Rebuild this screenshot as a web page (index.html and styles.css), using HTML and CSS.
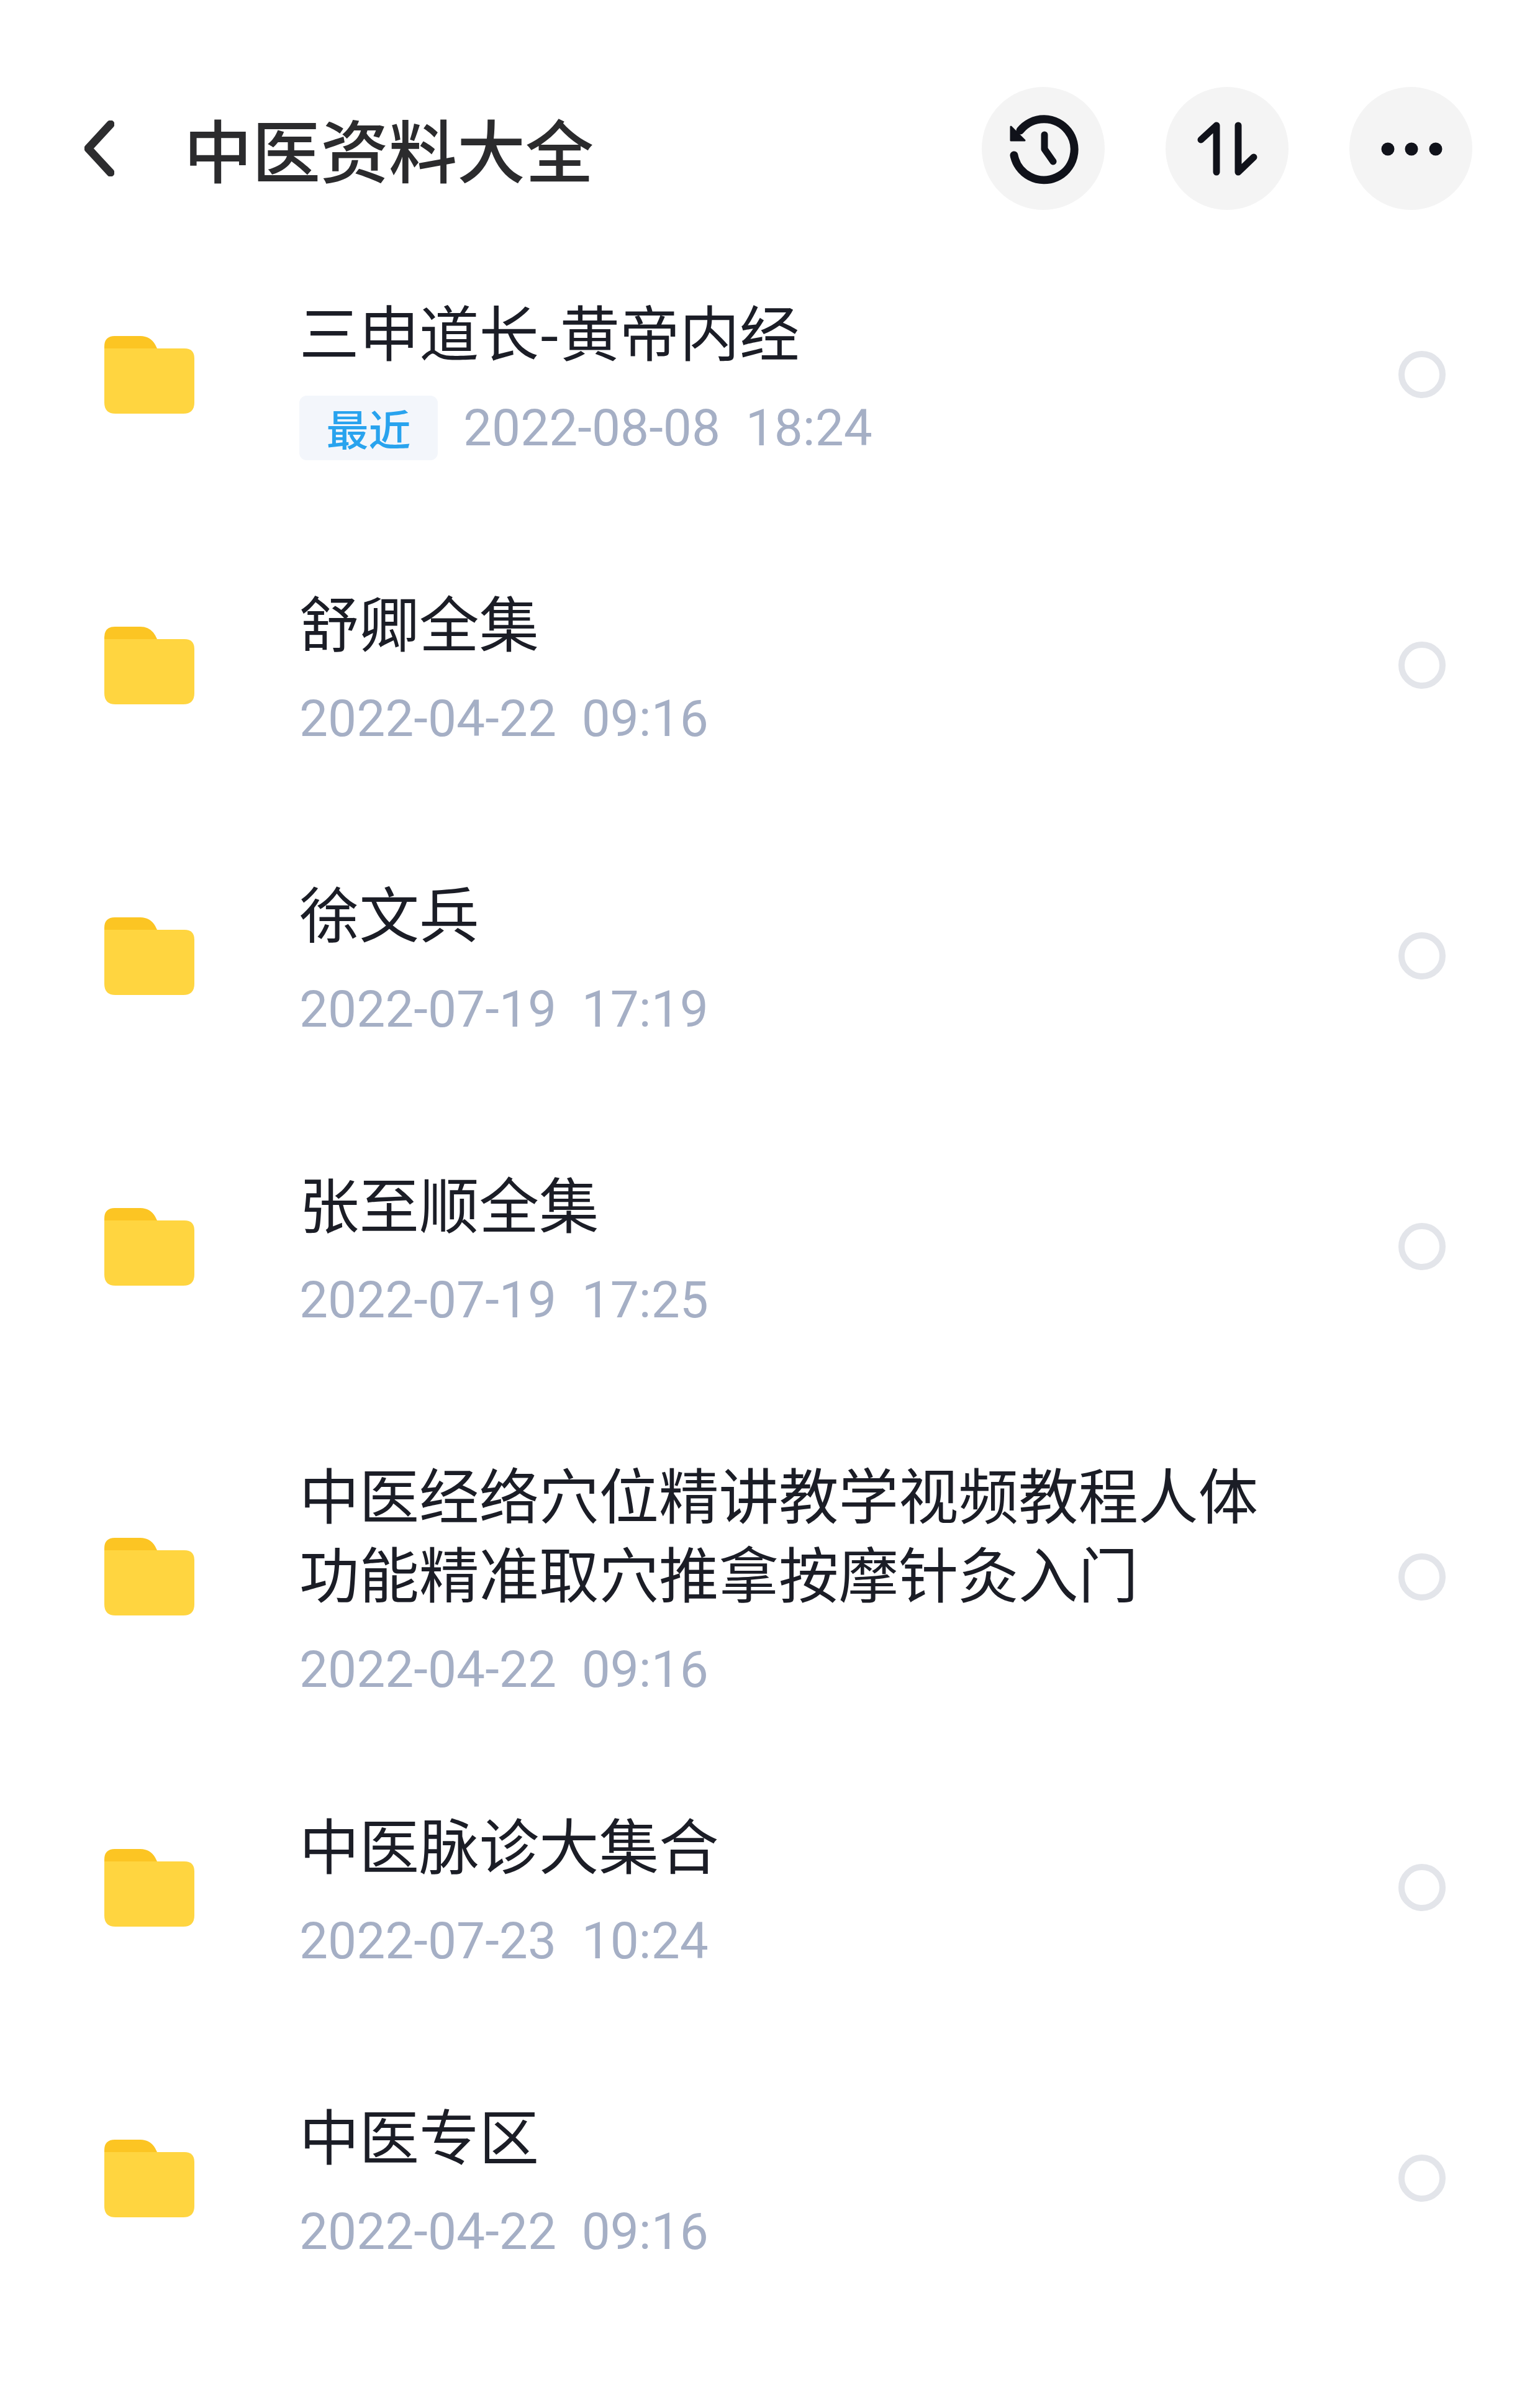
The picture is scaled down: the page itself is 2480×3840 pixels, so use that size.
FILE: index.html

```html
<!DOCTYPE html>
<html lang="zh-CN">
<head>
  <meta charset="UTF-8">
  <meta name="viewport" content="width=device-width, initial-scale=1.0">
  <title>中医资料大全</title>
  <link rel="stylesheet" href="styles.css">
</head>
<body>
  <svg class="defs" width="0" height="0">
    <symbol id="folder" viewBox="0 0 145 125">
      <path fill="#fcc523" d="M0 40 V17 Q0 0 17 0 H58 Q74 0 82 14 L90 30 H0 Z"/>
      <path fill="#ffd540" d="M0 20 H129 Q145 20 145 36 V107 Q145 125 127 125 H18 Q0 125 0 107 Z"/>
    </symbol>
  </svg>

  <header class="top-bar">
    <svg class="back" viewBox="0 0 48 90">
      <path d="M42 6 L6 45 L42 84"/>
    </svg>
    <h1 class="page-title">中医资料大全</h1>
    <div class="actions">
      <button class="round-btn">
        <svg viewBox="0 0 198 198">
          <path class="line" d="M52 110 A49 49 0 1 0 62 70"/>
          <path class="line thin" d="M101 77 V100 L115 120"/>
          <path class="head" d="M47 64 V86 H69 Z"/>
        </svg>
      </button>
      <button class="round-btn">
        <svg viewBox="0 0 198 198">
          <path class="line thin" d="M57 85 L82 62 V137"/>
          <path class="line thin" d="M117 62 V137 L142 113"/>
        </svg>
      </button>
      <button class="round-btn">
        <svg viewBox="0 0 198 198">
          <circle class="dot" cx="62" cy="100" r="10.5"/>
          <circle class="dot" cx="100" cy="100" r="10.5"/>
          <circle class="dot" cx="139" cy="100" r="10.5"/>
        </svg>
      </button>
    </div>
  </header>

  <ul class="file-list">
    <li class="file-row">
      <svg class="folder"><use href="#folder"/></svg>
      <div class="file-text">
        <div class="file-name">三申道长-黄帝内经</div>
        <div class="file-meta"><span class="tag">最近</span><span class="file-date">2022-08-08  18:24</span></div>
      </div>
      <span class="radio"></span>
    </li>
    <li class="file-row">
      <svg class="folder"><use href="#folder"/></svg>
      <div class="file-text">
        <div class="file-name">舒卿全集</div>
        <div class="file-meta"><span class="file-date">2022-04-22  09:16</span></div>
      </div>
      <span class="radio"></span>
    </li>
    <li class="file-row">
      <svg class="folder"><use href="#folder"/></svg>
      <div class="file-text">
        <div class="file-name">徐文兵</div>
        <div class="file-meta"><span class="file-date">2022-07-19  17:19</span></div>
      </div>
      <span class="radio"></span>
    </li>
    <li class="file-row">
      <svg class="folder"><use href="#folder"/></svg>
      <div class="file-text">
        <div class="file-name">张至顺全集</div>
        <div class="file-meta"><span class="file-date">2022-07-19  17:25</span></div>
      </div>
      <span class="radio"></span>
    </li>
    <li class="file-row tight">
      <svg class="folder"><use href="#folder"/></svg>
      <div class="file-text">
        <div class="file-name">中医经络穴位精讲教学视频教程人体功能精准取穴推拿按摩针灸入门</div>
        <div class="file-meta"><span class="file-date">2022-04-22  09:16</span></div>
      </div>
      <span class="radio"></span>
    </li>
    <li class="file-row">
      <svg class="folder"><use href="#folder"/></svg>
      <div class="file-text">
        <div class="file-name">中医脉诊大集合</div>
        <div class="file-meta"><span class="file-date">2022-07-23  10:24</span></div>
      </div>
      <span class="radio"></span>
    </li>
    <li class="file-row">
      <svg class="folder"><use href="#folder"/></svg>
      <div class="file-text">
        <div class="file-name">中医专区</div>
        <div class="file-meta"><span class="file-date">2022-04-22  09:16</span></div>
      </div>
      <span class="radio"></span>
    </li>
  </ul>
</body>
</html>
```

FILE: styles.css

```css
body {
  margin: 0;
  background-color: #fff;
  font-family: "Noto Sans CJK SC", "Noto Sans", sans-serif;
}

.defs {
  display: block;
}

.top-bar {
  display: flex;
  align-items: center;
  height: 198px;
  padding: 140px 109px 31px 136px;
}

.back {
  width: 48px;
  height: 90px;
  margin-right: 112px;
  fill: none;
  stroke: #2d2d2f;
  stroke-width: 13;
  stroke-linecap: round;
  stroke-linejoin: round;
}

.page-title {
  margin: 0 0 3px;
  font-size: 110px;
  font-weight: 500;
  line-height: 140px;
  color: #2b2b2d;
}

.actions {
  display: flex;
  gap: 98px;
  margin-left: auto;
}

.round-btn {
  width: 198px;
  height: 198px;
  padding: 0;
  border: none;
  border-radius: 50%;
  background-color: #f4f4f4;
}

.round-btn svg {
  display: block;
  width: 198px;
  height: 198px;
}

.line {
  fill: none;
  stroke: #10121a;
  stroke-width: 13;
  stroke-linecap: round;
  stroke-linejoin: round;
}

.line.thin {
  stroke-width: 11;
}

.head {
  fill: #10121a;
  stroke: #10121a;
  stroke-width: 3;
  stroke-linejoin: round;
}

.dot {
  fill: #10121a;
}

.file-list {
  margin: 0;
  padding: 0;
  list-style: none;
}

.file-row {
  display: flex;
  align-items: center;
  padding: 96px 0;
}

/* the long two line row sits closer to the next one */
.file-row.tight {
  margin-bottom: -31px;
}

.folder {
  flex: none;
  width: 145px;
  height: 125px;
  margin-left: 168px;
  margin-right: 169px;
}

.file-text {
  width: 1560px;
  padding-top: 3px;
}

.file-name {
  font-size: 96.5px;
  line-height: 127px;
  color: #1b1d26;
}

.file-meta {
  display: flex;
  align-items: center;
  height: 104px;
  margin-top: 42px;
}

.tag {
  width: 223px;
  height: 104px;
  margin-right: 41px;
  border-radius: 12px;
  background-color: #f3f6fb;
  font-size: 68px;
  font-weight: 500;
  line-height: 104px;
  text-align: center;
  color: #29a3ee;
}

.file-date {
  font-family: Roboto, "Liberation Sans", sans-serif;
  font-size: 82px;
  line-height: 104px;
  white-space: pre;
  color: #a5afc5;
}

.radio {
  flex: none;
  box-sizing: border-box;
  width: 76px;
  height: 76px;
  margin-left: 210px;
  border: 10px solid #e3e5ea;
  border-radius: 50%;
}
```
